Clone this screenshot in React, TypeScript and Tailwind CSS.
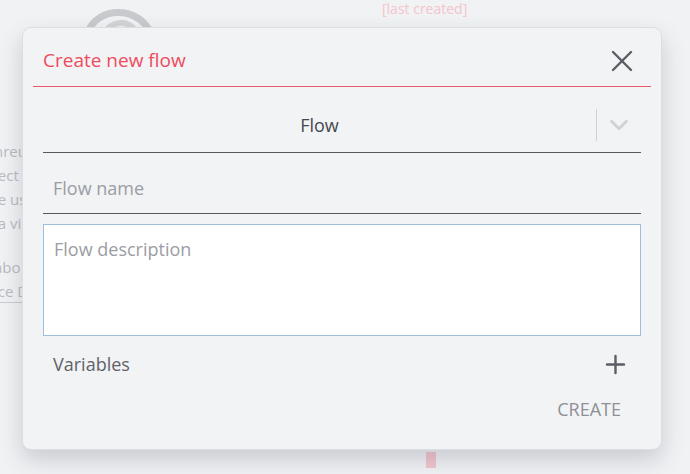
import { X, Plus, ChevronDown } from 'lucide-react';

function Backdrop() {
  return (
    <div className="absolute inset-0 overflow-hidden bg-[#f1f2f4]">
      <svg className="absolute left-[84px] top-[4px]" width="70" height="30" viewBox="0 0 70 30">
        <path d="M4 28 C 14 2, 54 2, 66 28" stroke="#c9cacd" strokeWidth="7" fill="none" />
        <path d="M20 30 C 28 16, 44 15, 52 28" stroke="#d3d4d7" strokeWidth="6" fill="none" />
      </svg>
      <div className="absolute left-[382px] top-[-2px] text-[14px] text-[#f4c4cc]">[last created]</div>
      <div className="absolute left-[-6px] top-[140px] flex flex-col gap-[2px] text-[15px] leading-[22px] text-[#b9bbbf]">
        <span>nreu</span>
        <span>lect</span>
        <span>le us</span>
        <span>la vi</span>
        <span className="mt-[20px]">abo</span>
        <span className="border-b border-[#c9cbce]">ice D</span>
      </div>
      <div className="absolute left-[426px] top-[452px] h-[16px] w-[10px] bg-[#f3c6cd]" />
    </div>
  );
}

export default function App() {
  return (
    <div
      className="relative h-[474px] w-[690px] overflow-hidden"
      style={{ fontFamily: '"Open Sans", "Noto Sans", sans-serif' }}
    >
      <Backdrop />
      <div className="absolute left-[22px] top-[27px] flex h-[423px] w-[640px] flex-col rounded-[9px] border border-[#dcdee1] bg-[#f2f3f5] shadow-[0_10px_22px_rgba(60,70,90,0.22)]">
        <div className="mx-[10px] flex h-[59px] items-center justify-between border-b border-[#e8596a] pl-[10px] pr-[11px] pt-[7px]">
          <h2 className="text-[19px] text-[#ee4b5d]">Create new flow</h2>
          <X size={36} strokeWidth={1.6} className="text-[#5b5e65]" />
        </div>

        <div className="flex flex-col px-[20px]">
          <div className="flex h-[66px] items-center border-b border-[#55585d]">
            <div className="flex-1 pt-[11px] text-center text-[18px] text-[#45484e]">Flow</div>
            <div className="mt-[11px] h-[32px] w-px bg-[#cfd1d4]" />
            <div className="flex w-[44px] justify-center pt-[11px]">
              <ChevronDown size={30} strokeWidth={2.2} className="text-[#cfd1d4]" />
            </div>
          </div>

          <div className="flex h-[61px] items-center border-b border-[#55585d] pl-[10px] pt-[10px] text-[18px] text-[#9b9da3]">
            Flow name
          </div>

          <div className="mt-[10px] h-[112px] border border-[#9dbfdd] bg-white px-[10px] pt-[11px] text-[18px] text-[#9b9da3]">
            Flow description
          </div>

          <div className="flex h-[56px] items-center justify-between pl-[10px] pr-[11px]">
            <span className="text-[18px] text-[#5f6269]">Variables</span>
            <Plus size={29} strokeWidth={2} className="text-[#5b5e65]" />
          </div>

          <div className="flex justify-end pr-[20px] pt-[4px]">
            <button className="text-[18px] text-[#8d9096]">CREATE</button>
          </div>
        </div>
      </div>
    </div>
  );
}
